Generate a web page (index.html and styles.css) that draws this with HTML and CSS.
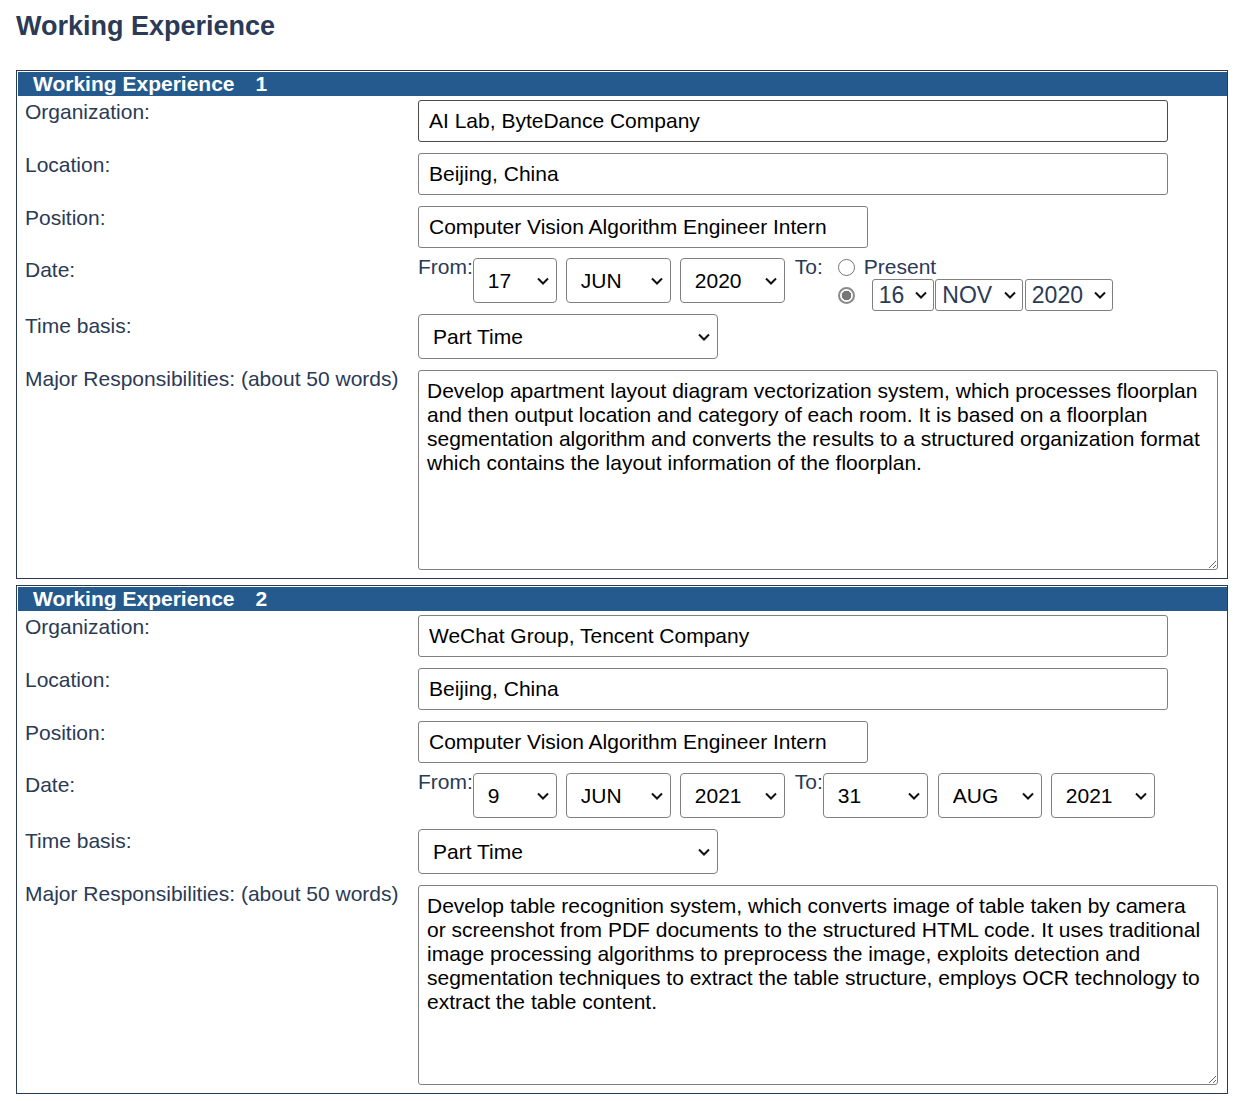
FILE: index.html
```html
<!DOCTYPE html>
<html lang="en">
<head>
<meta charset="utf-8">
<title>Working Experience</title>
<link rel="stylesheet" href="styles.css">
</head>
<body>
<div class="page">
  <h2 class="page-title">Working Experience</h2>

  <section class="exp">
    <div class="exp-bar"><span>Working Experience</span><span class="exp-num">1</span></div>
    <div class="exp-body">
      <div class="row">
        <label class="lbl">Organization:</label>
        <div class="fld"><input class="txt txt-long txt-hover" type="text" value="AI Lab, ByteDance Company"></div>
      </div>
      <div class="row">
        <label class="lbl">Location:</label>
        <div class="fld"><input class="txt txt-long" type="text" value="Beijing, China"></div>
      </div>
      <div class="row">
        <label class="lbl">Position:</label>
        <div class="fld"><input class="txt txt-mid" type="text" value="Computer Vision Algorithm Engineer Intern"></div>
      </div>
      <div class="row">
        <label class="lbl">Date:</label>
        <div class="fld date">
          <span class="from-lbl">From:</span>
          <div class="sel w-day gap9"><select><option>17</option></select><svg class="chev" viewBox="0 0 12 8"><path d="M1 1.5 6 6.5 11 1.5"/></svg></div>
          <div class="sel w-mon gap9"><select><option>JUN</option></select><svg class="chev" viewBox="0 0 12 8"><path d="M1 1.5 6 6.5 11 1.5"/></svg></div>
          <div class="sel w-mon gap9"><select><option>2020</option></select><svg class="chev" viewBox="0 0 12 8"><path d="M1 1.5 6 6.5 11 1.5"/></svg></div>
          <span class="to-lbl">To:</span>
          <div class="to-block">
            <div class="to-line1">
              <input class="radio" type="radio" name="to1"><span class="present">Present</span>
            </div>
            <div class="to-line2">
              <input class="radio radio-2" type="radio" name="to1" checked>
              <div class="sel sm w-sday"><select><option>16</option></select><svg class="chev" viewBox="0 0 12 8"><path d="M1 1.5 6 6.5 11 1.5"/></svg></div>
              <div class="sel sm w-smon"><select><option>NOV</option></select><svg class="chev" viewBox="0 0 12 8"><path d="M1 1.5 6 6.5 11 1.5"/></svg></div>
              <div class="sel sm w-smon"><select><option>2020</option></select><svg class="chev" viewBox="0 0 12 8"><path d="M1 1.5 6 6.5 11 1.5"/></svg></div>
            </div>
          </div>
        </div>
      </div>
      <div class="row">
        <label class="lbl">Time basis:</label>
        <div class="fld">
          <div class="sel w-basis"><select><option>Part Time</option></select><svg class="chev" viewBox="0 0 12 8"><path d="M1 1.5 6 6.5 11 1.5"/></svg></div>
        </div>
      </div>
      <div class="row">
        <label class="lbl lbl-area">Major Responsibilities: (about 50 words)</label>
        <div class="fld"><textarea class="area">Develop apartment layout diagram vectorization system, which processes floorplan and then output location and category of each room. It is based on a floorplan segmentation algorithm and converts the results to a structured organization format which contains the layout information of the floorplan.</textarea></div>
      </div>
    </div>
  </section>

  <section class="exp">
    <div class="exp-bar"><span>Working Experience</span><span class="exp-num">2</span></div>
    <div class="exp-body">
      <div class="row">
        <label class="lbl">Organization:</label>
        <div class="fld"><input class="txt txt-long" type="text" value="WeChat Group, Tencent Company"></div>
      </div>
      <div class="row">
        <label class="lbl">Location:</label>
        <div class="fld"><input class="txt txt-long" type="text" value="Beijing, China"></div>
      </div>
      <div class="row">
        <label class="lbl">Position:</label>
        <div class="fld"><input class="txt txt-mid" type="text" value="Computer Vision Algorithm Engineer Intern"></div>
      </div>
      <div class="row">
        <label class="lbl">Date:</label>
        <div class="fld date">
          <span class="from-lbl">From:</span>
          <div class="sel w-day gap9"><select><option>9</option></select><svg class="chev" viewBox="0 0 12 8"><path d="M1 1.5 6 6.5 11 1.5"/></svg></div>
          <div class="sel w-mon gap9"><select><option>JUN</option></select><svg class="chev" viewBox="0 0 12 8"><path d="M1 1.5 6 6.5 11 1.5"/></svg></div>
          <div class="sel w-mon gap9"><select><option>2021</option></select><svg class="chev" viewBox="0 0 12 8"><path d="M1 1.5 6 6.5 11 1.5"/></svg></div>
          <span class="to-lbl">To:</span>
          <div class="sel w-mon gap10"><select><option>31</option></select><svg class="chev" viewBox="0 0 12 8"><path d="M1 1.5 6 6.5 11 1.5"/></svg></div>
          <div class="sel w-mon2 gap9"><select><option>AUG</option></select><svg class="chev" viewBox="0 0 12 8"><path d="M1 1.5 6 6.5 11 1.5"/></svg></div>
          <div class="sel w-mon2"><select><option>2021</option></select><svg class="chev" viewBox="0 0 12 8"><path d="M1 1.5 6 6.5 11 1.5"/></svg></div>
        </div>
      </div>
      <div class="row">
        <label class="lbl">Time basis:</label>
        <div class="fld">
          <div class="sel w-basis"><select><option>Part Time</option></select><svg class="chev" viewBox="0 0 12 8"><path d="M1 1.5 6 6.5 11 1.5"/></svg></div>
        </div>
      </div>
      <div class="row">
        <label class="lbl lbl-area">Major Responsibilities: (about 50 words)</label>
        <div class="fld"><textarea class="area">Develop table recognition system, which converts image of table taken by camera or screenshot from PDF documents to the structured HTML code. It uses traditional image processing algorithms to preprocess the image, exploits detection and segmentation techniques to extract the table structure, employs OCR technology to extract the table content.</textarea></div>
      </div>
    </div>
  </section>
</div>
</body>
</html>
```
FILE: styles.css
```css
* { box-sizing: border-box; }

body {
  margin: 0;
  background: #fff;
  font-family: "Liberation Sans", Arial, sans-serif;
  color: #2b3a55;
}

.page {
  padding: 0 25px 0 16px;
}

.page-title {
  margin: 11px 0 28px;
  font-size: 27px;
  line-height: 31px;
  font-weight: bold;
  color: #2b3a55;
}

.exp {
  border: 1px solid #2b3a55;
  padding: 1px 0 8px 1px;
}

.exp + .exp {
  margin-top: 6px;
}

.exp-bar {
  height: 24px;
  background: #245a8e;
  color: #fff;
  font-weight: bold;
  font-size: 21px;
  line-height: 24px;
  padding-left: 15px;
  white-space: nowrap;
}

.exp-num {
  margin-left: 21px;
}

.exp-body {
  display: flex;
  flex-direction: column;
  gap: 10.8px;
  padding-top: 4px;
}

.row {
  display: grid;
  grid-template-columns: 400px 1fr;
  align-items: start;
}

.lbl {
  display: block;
  padding-left: 7px;
  font-size: 21px;
  line-height: 24px;
  color: #2b3a55;
}

.lbl-area {
  margin-top: -3px;
}

.fld {
  min-width: 0;
}

.txt {
  display: block;
  height: 42px;
  border: 1px solid #808080;
  border-radius: 3px;
  padding: 0 10px;
  font-family: inherit;
  font-size: 21px;
  color: #000;
  background: #fff;
  outline: none;
}

.txt-hover {
  border-color: #4a4a4a;
}

.txt-long { width: 750px; }
.txt-mid { width: 450px; }

/* date row */
.date {
  display: flex;
  align-items: flex-start;
  height: 45px;
}

.from-lbl,
.to-lbl {
  font-size: 21px;
  line-height: 24px;
  margin-top: -3px;
  white-space: nowrap;
  color: #2b3a55;
}

.to-lbl {
  width: 28px;
  margin-left: 1px;
}

.sel {
  position: relative;
  flex: none;
  height: 45px;
}

.sel select {
  display: block;
  width: 100%;
  height: 100%;
  -webkit-appearance: none;
  appearance: none;
  border: 1px solid #808080;
  border-radius: 4px;
  background: #fff;
  padding: 0 0 0 14px;
  font-family: inherit;
  font-size: 21px;
  color: #000;
  outline: none;
}

.chev {
  position: absolute;
  right: 8px;
  top: 50%;
  width: 12px;
  height: 8px;
  margin-top: -4px;
  fill: none;
  stroke: #111;
  stroke-width: 2;
  pointer-events: none;
}

.w-day { width: 84px; }
.w-mon { width: 105px; }
.w-mon2 { width: 104px; }
.w-basis { width: 300px; height: 45px; }
.gap9 { margin-right: 9px; }
.gap10 { margin-right: 10px; }

.to-block {
  display: flex;
  flex-direction: column;
  margin-top: -3px;
  margin-left: 15px;
}

.to-line1 {
  display: flex;
  align-items: center;
  height: 24px;
}

.to-line2 {
  display: flex;
  align-items: center;
  height: 32px;
}

.present {
  font-size: 21px;
  line-height: 24px;
  margin-left: 9px;
  color: #2b3a55;
}

.radio {
  -webkit-appearance: none;
  appearance: none;
  margin: 0;
  width: 17px;
  height: 17px;
  border: 1px solid #767676;
  border-radius: 50%;
  background: #fff;
  flex: none;
}

.radio:checked {
  border: 2px solid #8a8a8a;
  background: radial-gradient(circle, #777 0 4.5px, #fff 5.1px);
}

.radio-2 {
  margin-right: 17px;
}

.sel.sm {
  height: 32px;
  margin-right: 1.5px;
}

.sel.sm select {
  padding-left: 6px;
  font-size: 23px;
  color: #2b3a55;
  border-radius: 3px;
}

.sel.sm .chev {
  right: 7px;
}

.w-sday { width: 62px; }
.w-smon { width: 88px; }

.area {
  display: block;
  width: 800px;
  height: 200px;
  border: 1px solid #808080;
  border-radius: 3px;
  padding: 8px 8px;
  font-family: inherit;
  font-size: 21px;
  line-height: normal;
  color: #000;
  background: #fff;
  resize: both;
  outline: none;
}
```
